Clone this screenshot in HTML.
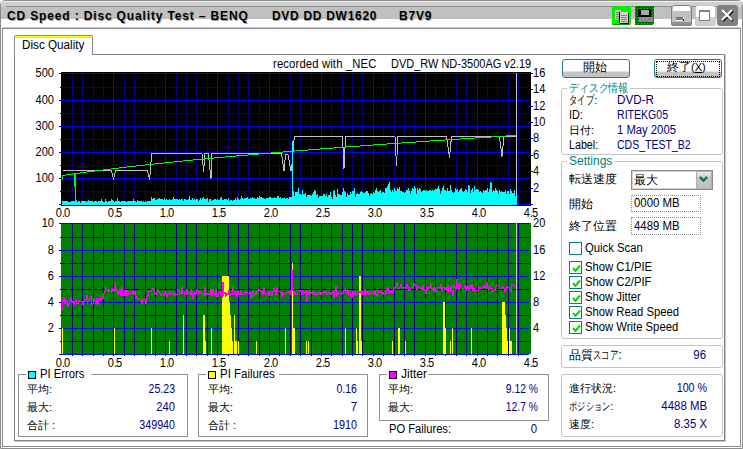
<!DOCTYPE html>
<html><head><meta charset="utf-8">
<style>
*{margin:0;padding:0;box-sizing:border-box}
html,body{width:743px;height:449px;overflow:hidden;background:#fff}
body{position:relative;font-family:"Liberation Sans",sans-serif;font-size:11px;color:#000}
.a{position:absolute}
.t{position:absolute;white-space:pre;line-height:12px}
.hl{position:absolute;height:1px;background:#8c8c8c}
.vl{position:absolute;width:1px;background:#8c8c8c}
.nv{color:#000080}
.grp{position:absolute;border:1px solid #c4c4c4;border-radius:3px}
.box{position:absolute;border:1px solid #8c8c8c}
.cb{position:absolute;width:13px;height:13px;border:1px solid #008080;background:#fff}
.ck{position:absolute;left:1px;top:1px}
.axl{position:absolute;white-space:pre;line-height:12px;font-size:11px}
</style></head><body>
<!-- window frame -->
<div class="a" style="left:0;top:0;width:743px;height:449px;border:1px solid #8c8c8c;border-top-left-radius:5px;border-top-right-radius:5px"></div>
<div class="a" style="left:1px;top:1px;width:741px;height:6px;background:#d0d0d0;border-top:1px solid #f4f4f4;border-top-left-radius:4px;border-top-right-radius:4px"></div>
<div class="hl" style="left:6px;top:6px;width:731px;background:#8c8c8c"></div>
<div class="a" style="left:1px;top:7px;width:741px;height:12px;background:#c0c0c0"></div>
<div class="hl" style="left:3px;top:27px;width:737px;background:#c8c8c8"></div>
<div class="box" style="left:2px;top:28px;width:739px;height:419px"></div>
<!-- title -->
<div class="t" style="left:7px;top:9px;font-size:12px;font-weight:bold;letter-spacing:0.85px;line-height:14px;text-shadow:1px 1px 0 #a8a8a8">CD Speed : Disc Quality Test – BENQ</div>
<div class="t" style="left:272px;top:9px;font-size:12px;font-weight:bold;letter-spacing:0.7px;line-height:14px;text-shadow:1px 1px 0 #a8a8a8">DVD DD DW1620</div>
<div class="t" style="left:399px;top:9px;font-size:12px;font-weight:bold;letter-spacing:0.8px;line-height:14px;text-shadow:1px 1px 0 #a8a8a8">B7V9</div>
<!-- title icons -->
<svg class="a" style="left:611px;top:5px" width="45" height="21" shape-rendering="crispEdges">
<rect x="1" y="1" width="19" height="19" rx="2" fill="#00f000"/>
<rect x="2" y="19" width="17" height="1" fill="#00a000"/>
<rect x="4" y="5" width="4" height="2" fill="#a0c8a0"/>
<rect x="4" y="5" width="6" height="10" fill="#c4c4c4"/>
<path d="M5 7h4M5 9h4M5 11h4M5 13h4" stroke="#808080"/>
<rect x="9" y="7" width="8" height="11" fill="#d4d4d4"/>
<rect x="17" y="8" width="1" height="11" fill="#000"/>
<rect x="9" y="18" width="9" height="1" fill="#000"/>
<rect x="8" y="7" width="1" height="11" fill="#000"/>
<path d="M10 10h6M10 12h6M10 14h6M10 16h6" stroke="#808080"/>
<rect x="24" y="1" width="19" height="19" rx="2" fill="#006800"/>
<rect x="24" y="1" width="19" height="19" rx="2" fill="url(#dots)"/>
<rect x="27" y="4" width="13" height="8" fill="#000"/>
<rect x="30" y="5" width="8" height="5" fill="#a8a8a8"/>
<rect x="28" y="12" width="14" height="5" fill="#909090"/>
<path d="M30 14h1M34 15h1M38 14h1M31 16h1M36 16h1" stroke="#3050c0"/>
<defs><pattern id="dots" width="3" height="3" patternUnits="userSpaceOnUse"><rect x="0" y="0" width="1" height="1" fill="#00e000"/><rect x="2" y="1" width="1" height="1" fill="#00b000"/></pattern></defs>
</svg>
<svg class="a" style="left:670px;top:4px" width="47" height="23" shape-rendering="crispEdges">
<rect x="1.5" y="1.5" width="20" height="20" rx="3" fill="#c0c0c0" stroke="#808080"/>
<rect x="3" y="2" width="17" height="5" fill="#ffffff"/>
<rect x="2" y="18" width="19" height="3" fill="#909090"/>
<rect x="6" y="13" width="8" height="4" fill="#ffffff"/>
<rect x="6" y="13" width="7" height="3" fill="#808080"/>
<path d="M6 13h1M8 13h1M10 13h1M12 13h1" stroke="#008080"/>
<rect x="13" y="15" width="1" height="2" fill="#0000a0"/>
<rect x="25.5" y="1.5" width="20" height="20" rx="3" fill="#ffffff" stroke="#c8c8c8"/>
<rect x="26" y="13" width="19" height="8" fill="#d0d0d0"/>
<rect x="29.5" y="6.5" width="10" height="10" fill="#fff" stroke="#808080"/>
<rect x="30" y="7" width="10" height="1" fill="#808080"/>
</svg>
<div class="a" style="left:717px;top:5px;width:21px;height:21px;background:#808080;border-radius:3px"></div>
<svg class="a" style="left:717px;top:5px" width="21" height="21"><path d="M5 5L15 15M15 5L5 15" stroke="#000" stroke-width="2.5" transform="translate(0.8,0.8)"/><path d="M5 5L15 15M15 5L5 15" stroke="#fff" stroke-width="2.2"/></svg>

<!-- tab -->
<div class="box" style="left:14px;top:54px;width:711px;height:387px;border-color:#808080;box-shadow:1px 1px 0 #c8c8c8"></div>
<div class="a" style="left:14px;top:35px;width:79px;height:20px;background:#fff;border:1px solid #8c8c8c;border-bottom:none;border-top-left-radius:2px;border-top-right-radius:2px"></div>
<div class="a" style="left:15px;top:36px;width:77px;height:1px;background:#ffff00"></div>
<div class="a" style="left:15px;top:37px;width:77px;height:1px;background:repeating-linear-gradient(90deg,#ffff00 0,#ffff00 2px,#c8c8a0 2px,#c8c8a0 3px)"></div>
<div class="t" style="left:22px;top:39px;font-size:12px;transform:scaleX(0.975);transform-origin:0 0">Disc Quality</div>

<svg class="a" style="left:0;top:0" width="743" height="449" shape-rendering="crispEdges">
<rect x="61" y="72" width="470" height="134" fill="#000"/>
<rect x="61" y="223" width="470" height="131" fill="#008000"/>
<rect x="72" y="73" width="1" height="133" fill="#000080"/>
<rect x="72" y="223" width="1" height="133" fill="#000080"/>
<rect x="82" y="73" width="1" height="133" fill="#000080"/>
<rect x="82" y="223" width="1" height="133" fill="#000080"/>
<rect x="93" y="73" width="1" height="133" fill="#000080"/>
<rect x="93" y="223" width="1" height="133" fill="#000080"/>
<rect x="103" y="73" width="1" height="133" fill="#000080"/>
<rect x="103" y="223" width="1" height="133" fill="#000080"/>
<rect x="113" y="73" width="1" height="133" fill="#0000ff"/>
<rect x="113" y="223" width="1" height="133" fill="#0000ff"/>
<rect x="124" y="73" width="1" height="133" fill="#000080"/>
<rect x="124" y="223" width="1" height="133" fill="#000080"/>
<rect x="134" y="73" width="1" height="133" fill="#000080"/>
<rect x="134" y="223" width="1" height="133" fill="#000080"/>
<rect x="145" y="73" width="1" height="133" fill="#000080"/>
<rect x="145" y="223" width="1" height="133" fill="#000080"/>
<rect x="155" y="73" width="1" height="133" fill="#000080"/>
<rect x="155" y="223" width="1" height="133" fill="#000080"/>
<rect x="165" y="73" width="1" height="133" fill="#0000ff"/>
<rect x="165" y="223" width="1" height="133" fill="#0000ff"/>
<rect x="176" y="73" width="1" height="133" fill="#000080"/>
<rect x="176" y="223" width="1" height="133" fill="#000080"/>
<rect x="186" y="73" width="1" height="133" fill="#000080"/>
<rect x="186" y="223" width="1" height="133" fill="#000080"/>
<rect x="196" y="73" width="1" height="133" fill="#000080"/>
<rect x="196" y="223" width="1" height="133" fill="#000080"/>
<rect x="207" y="73" width="1" height="133" fill="#000080"/>
<rect x="207" y="223" width="1" height="133" fill="#000080"/>
<rect x="217" y="73" width="1" height="133" fill="#0000ff"/>
<rect x="217" y="223" width="1" height="133" fill="#0000ff"/>
<rect x="228" y="73" width="1" height="133" fill="#000080"/>
<rect x="228" y="223" width="1" height="133" fill="#000080"/>
<rect x="238" y="73" width="1" height="133" fill="#000080"/>
<rect x="238" y="223" width="1" height="133" fill="#000080"/>
<rect x="248" y="73" width="1" height="133" fill="#000080"/>
<rect x="248" y="223" width="1" height="133" fill="#000080"/>
<rect x="259" y="73" width="1" height="133" fill="#000080"/>
<rect x="259" y="223" width="1" height="133" fill="#000080"/>
<rect x="269" y="73" width="1" height="133" fill="#0000ff"/>
<rect x="269" y="223" width="1" height="133" fill="#0000ff"/>
<rect x="279" y="73" width="1" height="133" fill="#000080"/>
<rect x="279" y="223" width="1" height="133" fill="#000080"/>
<rect x="290" y="73" width="1" height="133" fill="#000080"/>
<rect x="290" y="223" width="1" height="133" fill="#000080"/>
<rect x="300" y="73" width="1" height="133" fill="#000080"/>
<rect x="300" y="223" width="1" height="133" fill="#000080"/>
<rect x="311" y="73" width="1" height="133" fill="#000080"/>
<rect x="311" y="223" width="1" height="133" fill="#000080"/>
<rect x="321" y="73" width="1" height="133" fill="#0000ff"/>
<rect x="321" y="223" width="1" height="133" fill="#0000ff"/>
<rect x="331" y="73" width="1" height="133" fill="#000080"/>
<rect x="331" y="223" width="1" height="133" fill="#000080"/>
<rect x="342" y="73" width="1" height="133" fill="#000080"/>
<rect x="342" y="223" width="1" height="133" fill="#000080"/>
<rect x="352" y="73" width="1" height="133" fill="#000080"/>
<rect x="352" y="223" width="1" height="133" fill="#000080"/>
<rect x="362" y="73" width="1" height="133" fill="#000080"/>
<rect x="362" y="223" width="1" height="133" fill="#000080"/>
<rect x="373" y="73" width="1" height="133" fill="#0000ff"/>
<rect x="373" y="223" width="1" height="133" fill="#0000ff"/>
<rect x="383" y="73" width="1" height="133" fill="#000080"/>
<rect x="383" y="223" width="1" height="133" fill="#000080"/>
<rect x="394" y="73" width="1" height="133" fill="#000080"/>
<rect x="394" y="223" width="1" height="133" fill="#000080"/>
<rect x="404" y="73" width="1" height="133" fill="#000080"/>
<rect x="404" y="223" width="1" height="133" fill="#000080"/>
<rect x="414" y="73" width="1" height="133" fill="#000080"/>
<rect x="414" y="223" width="1" height="133" fill="#000080"/>
<rect x="425" y="73" width="1" height="133" fill="#0000ff"/>
<rect x="425" y="223" width="1" height="133" fill="#0000ff"/>
<rect x="435" y="73" width="1" height="133" fill="#000080"/>
<rect x="435" y="223" width="1" height="133" fill="#000080"/>
<rect x="445" y="73" width="1" height="133" fill="#000080"/>
<rect x="445" y="223" width="1" height="133" fill="#000080"/>
<rect x="456" y="73" width="1" height="133" fill="#000080"/>
<rect x="456" y="223" width="1" height="133" fill="#000080"/>
<rect x="466" y="73" width="1" height="133" fill="#000080"/>
<rect x="466" y="223" width="1" height="133" fill="#000080"/>
<rect x="477" y="73" width="1" height="133" fill="#0000ff"/>
<rect x="477" y="223" width="1" height="133" fill="#0000ff"/>
<rect x="487" y="73" width="1" height="133" fill="#000080"/>
<rect x="487" y="223" width="1" height="133" fill="#000080"/>
<rect x="497" y="73" width="1" height="133" fill="#000080"/>
<rect x="497" y="223" width="1" height="133" fill="#000080"/>
<rect x="508" y="73" width="1" height="133" fill="#000080"/>
<rect x="508" y="223" width="1" height="133" fill="#000080"/>
<rect x="518" y="73" width="1" height="133" fill="#000080"/>
<rect x="518" y="223" width="1" height="133" fill="#000080"/>
<rect x="61" y="73" width="468" height="1" fill="#0000ff"/>
<rect x="59" y="73" width="2" height="1" fill="#0000ff"/>
<rect x="61" y="87" width="468" height="1" fill="#000080"/>
<rect x="60" y="87" width="1" height="1" fill="#000080"/>
<rect x="61" y="100" width="468" height="1" fill="#0000ff"/>
<rect x="59" y="100" width="2" height="1" fill="#0000ff"/>
<rect x="61" y="113" width="468" height="1" fill="#000080"/>
<rect x="60" y="113" width="1" height="1" fill="#000080"/>
<rect x="61" y="126" width="468" height="1" fill="#0000ff"/>
<rect x="59" y="126" width="2" height="1" fill="#0000ff"/>
<rect x="61" y="139" width="468" height="1" fill="#000080"/>
<rect x="60" y="139" width="1" height="1" fill="#000080"/>
<rect x="61" y="152" width="468" height="1" fill="#0000ff"/>
<rect x="59" y="152" width="2" height="1" fill="#0000ff"/>
<rect x="61" y="165" width="468" height="1" fill="#000080"/>
<rect x="60" y="165" width="1" height="1" fill="#000080"/>
<rect x="61" y="178" width="468" height="1" fill="#0000ff"/>
<rect x="59" y="178" width="2" height="1" fill="#0000ff"/>
<rect x="61" y="191" width="468" height="1" fill="#000080"/>
<rect x="60" y="191" width="1" height="1" fill="#000080"/>
<rect x="61" y="204" width="468" height="1" fill="#0000ff"/>
<rect x="59" y="204" width="2" height="1" fill="#0000ff"/>
<rect x="61" y="223" width="468" height="1" fill="#0000ff"/>
<rect x="59" y="223" width="2" height="1" fill="#0000ff"/>
<rect x="61" y="237" width="468" height="1" fill="#000080"/>
<rect x="60" y="237" width="1" height="1" fill="#000080"/>
<rect x="61" y="250" width="468" height="1" fill="#0000ff"/>
<rect x="59" y="250" width="2" height="1" fill="#0000ff"/>
<rect x="61" y="263" width="468" height="1" fill="#000080"/>
<rect x="60" y="263" width="1" height="1" fill="#000080"/>
<rect x="61" y="276" width="468" height="1" fill="#0000ff"/>
<rect x="59" y="276" width="2" height="1" fill="#0000ff"/>
<rect x="61" y="289" width="468" height="1" fill="#000080"/>
<rect x="60" y="289" width="1" height="1" fill="#000080"/>
<rect x="61" y="302" width="468" height="1" fill="#0000ff"/>
<rect x="59" y="302" width="2" height="1" fill="#0000ff"/>
<rect x="61" y="315" width="468" height="1" fill="#000080"/>
<rect x="60" y="315" width="1" height="1" fill="#000080"/>
<rect x="61" y="328" width="468" height="1" fill="#0000ff"/>
<rect x="59" y="328" width="2" height="1" fill="#0000ff"/>
<rect x="61" y="341" width="468" height="1" fill="#000080"/>
<rect x="60" y="341" width="1" height="1" fill="#000080"/>
<rect x="61" y="354" width="468" height="1" fill="#0000ff"/>
<rect x="59" y="354" width="2" height="1" fill="#0000ff"/>
<rect x="529" y="204" width="4" height="1" fill="#0000ff"/>
<rect x="529" y="196" width="2" height="1" fill="#000080"/>
<rect x="529" y="188" width="4" height="1" fill="#0000ff"/>
<rect x="529" y="179" width="2" height="1" fill="#000080"/>
<rect x="529" y="171" width="4" height="1" fill="#0000ff"/>
<rect x="529" y="163" width="2" height="1" fill="#000080"/>
<rect x="529" y="155" width="4" height="1" fill="#0000ff"/>
<rect x="529" y="147" width="2" height="1" fill="#000080"/>
<rect x="529" y="138" width="4" height="1" fill="#0000ff"/>
<rect x="529" y="130" width="2" height="1" fill="#000080"/>
<rect x="529" y="122" width="4" height="1" fill="#0000ff"/>
<rect x="529" y="114" width="2" height="1" fill="#000080"/>
<rect x="529" y="106" width="4" height="1" fill="#0000ff"/>
<rect x="529" y="98" width="2" height="1" fill="#000080"/>
<rect x="529" y="89" width="4" height="1" fill="#0000ff"/>
<rect x="529" y="81" width="2" height="1" fill="#000080"/>
<rect x="529" y="73" width="4" height="1" fill="#0000ff"/>
<polyline points="62.5,170.5 111.5,170.5 113.5,179.5 115.5,170.5 147.5,170.5 149.5,179.5 150.5,170.5 151.5,153.5 202.0,153.5 202.5,158.5 203.5,171.5 204.5,160.5 205.0,153.5 208.5,153.5 209.5,165.5 211.0,178.5 212.0,153.5 281.5,153.5 284.0,171.0 285.5,154.5 288.0,154.5 291.0,171.0 292.5,160.5 293.5,141.5 295.0,136.5 342.5,136.5 344.0,168.5 345.5,136.5 395.0,136.5 396.5,165.5 398.0,136.5 446.5,136.5 449.5,157.5 451.5,136.5 499.5,136.5 502.0,156.5 504.0,136.5 515.5,136.5" fill="none" stroke="#c0c0c0" stroke-width="1"/>
<rect x="516" y="73" width="1" height="132" fill="#c0c0c0"/>
<rect x="62" y="175" width="1" height="5" fill="#00ff00"/>
<rect x="62" y="175" width="4" height="1" fill="#00ff00"/>
<rect x="66" y="174" width="7" height="1" fill="#00ff00"/>
<rect x="73" y="173" width="7" height="1" fill="#00ff00"/>
<rect x="80" y="172" width="7" height="1" fill="#00ff00"/>
<rect x="87" y="171" width="8" height="1" fill="#00ff00"/>
<rect x="95" y="170" width="8" height="1" fill="#00ff00"/>
<rect x="103" y="169" width="8" height="1" fill="#00ff00"/>
<rect x="111" y="168" width="8" height="1" fill="#00ff00"/>
<rect x="119" y="167" width="8" height="1" fill="#00ff00"/>
<rect x="127" y="166" width="9" height="1" fill="#00ff00"/>
<rect x="136" y="165" width="9" height="1" fill="#00ff00"/>
<rect x="145" y="164" width="9" height="1" fill="#00ff00"/>
<rect x="154" y="163" width="10" height="1" fill="#00ff00"/>
<rect x="164" y="162" width="9" height="1" fill="#00ff00"/>
<rect x="173" y="161" width="10" height="1" fill="#00ff00"/>
<rect x="183" y="160" width="10" height="1" fill="#00ff00"/>
<rect x="193" y="159" width="11" height="1" fill="#00ff00"/>
<rect x="204" y="158" width="10" height="1" fill="#00ff00"/>
<rect x="214" y="157" width="11" height="1" fill="#00ff00"/>
<rect x="225" y="156" width="11" height="1" fill="#00ff00"/>
<rect x="236" y="155" width="12" height="1" fill="#00ff00"/>
<rect x="248" y="154" width="11" height="1" fill="#00ff00"/>
<rect x="259" y="153" width="12" height="1" fill="#00ff00"/>
<rect x="271" y="152" width="12" height="1" fill="#00ff00"/>
<rect x="283" y="151" width="12" height="1" fill="#00ff00"/>
<rect x="295" y="150" width="13" height="1" fill="#00ff00"/>
<rect x="308" y="149" width="12" height="1" fill="#00ff00"/>
<rect x="320" y="148" width="13" height="1" fill="#00ff00"/>
<rect x="333" y="147" width="13" height="1" fill="#00ff00"/>
<rect x="346" y="146" width="14" height="1" fill="#00ff00"/>
<rect x="360" y="145" width="13" height="1" fill="#00ff00"/>
<rect x="373" y="144" width="14" height="1" fill="#00ff00"/>
<rect x="387" y="143" width="14" height="1" fill="#00ff00"/>
<rect x="401" y="142" width="15" height="1" fill="#00ff00"/>
<rect x="416" y="141" width="14" height="1" fill="#00ff00"/>
<rect x="430" y="140" width="15" height="1" fill="#00ff00"/>
<rect x="445" y="139" width="15" height="1" fill="#00ff00"/>
<rect x="460" y="138" width="15" height="1" fill="#00ff00"/>
<rect x="475" y="137" width="16" height="1" fill="#00ff00"/>
<rect x="491" y="136" width="15" height="1" fill="#00ff00"/>
<rect x="506" y="135" width="10" height="1" fill="#00ff00"/>
<rect x="74" y="173" width="2" height="14" fill="#00ff00"/>
<rect x="75" y="187" width="1" height="17" fill="#00ff00"/>
<path d="M62,205 L62,201 L63,201 L63,201 L64,201 L64,201 L65,201 L65,201 L66,201 L66,201 L67,201 L67,201 L68,201 L68,202 L69,202 L69,202 L70,202 L70,202 L71,202 L71,201 L72,201 L72,201 L73,201 L73,201 L74,201 L74,201 L75,201 L75,202 L76,202 L76,200 L77,200 L77,202 L78,202 L78,201 L79,201 L79,201 L80,201 L80,203 L81,203 L81,201 L82,201 L82,201 L83,201 L83,201 L84,201 L84,201 L85,201 L85,201 L86,201 L86,202 L87,202 L87,201 L88,201 L88,200 L89,200 L89,201 L90,201 L90,201 L91,201 L91,201 L92,201 L92,201 L93,201 L93,202 L94,202 L94,201 L95,201 L95,201 L96,201 L96,201 L97,201 L97,202 L98,202 L98,201 L99,201 L99,201 L100,201 L100,201 L101,201 L101,199 L102,199 L102,201 L103,201 L103,202 L104,202 L104,202 L105,202 L105,199 L106,199 L106,201 L107,201 L107,202 L108,202 L108,201 L109,201 L109,201 L110,201 L110,201 L111,201 L111,199 L112,199 L112,200 L113,200 L113,201 L114,201 L114,202 L115,202 L115,201 L116,201 L116,201 L117,201 L117,198 L118,198 L118,201 L119,201 L119,201 L120,201 L120,202 L121,202 L121,201 L122,201 L122,201 L123,201 L123,201 L124,201 L124,201 L125,201 L125,201 L126,201 L126,202 L127,202 L127,201 L128,201 L128,201 L129,201 L129,201 L130,201 L130,201 L131,201 L131,201 L132,201 L132,201 L133,201 L133,199 L134,199 L134,201 L135,201 L135,201 L136,201 L136,202 L137,202 L137,200 L138,200 L138,201 L139,201 L139,201 L140,201 L140,201 L141,201 L141,201 L142,201 L142,202 L143,202 L143,201 L144,201 L144,202 L145,202 L145,201 L146,201 L146,202 L147,202 L147,201 L148,201 L148,201 L149,201 L149,201 L150,201 L150,201 L151,201 L151,197 L152,197 L152,199 L153,199 L153,198 L154,198 L154,198 L155,198 L155,200 L156,200 L156,200 L157,200 L157,199 L158,199 L158,199 L159,199 L159,198 L160,198 L160,199 L161,199 L161,199 L162,199 L162,199 L163,199 L163,200 L164,200 L164,198 L165,198 L165,200 L166,200 L166,199 L167,199 L167,200 L168,200 L168,200 L169,200 L169,199 L170,199 L170,200 L171,200 L171,200 L172,200 L172,199 L173,199 L173,197 L174,197 L174,199 L175,199 L175,199 L176,199 L176,199 L177,199 L177,199 L178,199 L178,200 L179,200 L179,199 L180,199 L180,200 L181,200 L181,199 L182,199 L182,199 L183,199 L183,201 L184,201 L184,199 L185,199 L185,199 L186,199 L186,200 L187,200 L187,200 L188,200 L188,199 L189,199 L189,196 L190,196 L190,200 L191,200 L191,200 L192,200 L192,198 L193,198 L193,200 L194,200 L194,199 L195,199 L195,200 L196,200 L196,199 L197,199 L197,199 L198,199 L198,201 L199,201 L199,200 L200,200 L200,198 L201,198 L201,200 L202,200 L202,198 L203,198 L203,197 L204,197 L204,199 L205,199 L205,199 L206,199 L206,199 L207,199 L207,198 L208,198 L208,202 L209,202 L209,199 L210,199 L210,199 L211,199 L211,201 L212,201 L212,200 L213,200 L213,200 L214,200 L214,199 L215,199 L215,199 L216,199 L216,200 L217,200 L217,199 L218,199 L218,200 L219,200 L219,200 L220,200 L220,198 L221,198 L221,197 L222,197 L222,200 L223,200 L223,200 L224,200 L224,199 L225,199 L225,199 L226,199 L226,199 L227,199 L227,200 L228,200 L228,198 L229,198 L229,201 L230,201 L230,200 L231,200 L231,200 L232,200 L232,201 L233,201 L233,200 L234,200 L234,200 L235,200 L235,198 L236,198 L236,200 L237,200 L237,197 L238,197 L238,199 L239,199 L239,200 L240,200 L240,199 L241,199 L241,196 L242,196 L242,198 L243,198 L243,199 L244,199 L244,198 L245,198 L245,198 L246,198 L246,198 L247,198 L247,197 L248,197 L248,199 L249,199 L249,199 L250,199 L250,198 L251,198 L251,198 L252,198 L252,197 L253,197 L253,198 L254,198 L254,198 L255,198 L255,199 L256,199 L256,199 L257,199 L257,197 L258,197 L258,198 L259,198 L259,196 L260,196 L260,197 L261,197 L261,197 L262,197 L262,198 L263,198 L263,198 L264,198 L264,199 L265,199 L265,199 L266,199 L266,198 L267,198 L267,198 L268,198 L268,198 L269,198 L269,197 L270,197 L270,197 L271,197 L271,198 L272,198 L272,198 L273,198 L273,198 L274,198 L274,197 L275,197 L275,198 L276,198 L276,198 L277,198 L277,196 L278,196 L278,196 L279,196 L279,198 L280,198 L280,197 L281,197 L281,199 L282,199 L282,198 L283,198 L283,198 L284,198 L284,198 L285,198 L285,199 L286,199 L286,198 L287,198 L287,198 L288,198 L288,199 L289,199 L289,197 L290,197 L290,197 L291,197 L291,197 L292,197 L292,199 L293,199 L293,191 L294,191 L294,196 L295,196 L295,192 L296,192 L296,192 L297,192 L297,192 L298,192 L298,188 L299,188 L299,194 L300,194 L300,194 L301,194 L301,195 L302,195 L302,190 L303,190 L303,194 L304,194 L304,194 L305,194 L305,193 L306,193 L306,197 L307,197 L307,195 L308,195 L308,195 L309,195 L309,195 L310,195 L310,195 L311,195 L311,196 L312,196 L312,194 L313,194 L313,192 L314,192 L314,190 L315,190 L315,191 L316,191 L316,195 L317,195 L317,194 L318,194 L318,198 L319,198 L319,196 L320,196 L320,196 L321,196 L321,196 L322,196 L322,196 L323,196 L323,194 L324,194 L324,194 L325,194 L325,196 L326,196 L326,194 L327,194 L327,197 L328,197 L328,195 L329,195 L329,195 L330,195 L330,192 L331,192 L331,197 L332,197 L332,199 L333,199 L333,191 L334,191 L334,190 L335,190 L335,195 L336,195 L336,197 L337,197 L337,189 L338,189 L338,194 L339,194 L339,194 L340,194 L340,195 L341,195 L341,195 L342,195 L342,192 L343,192 L343,188 L344,188 L344,191 L345,191 L345,192 L346,192 L346,197 L347,197 L347,193 L348,193 L348,195 L349,195 L349,195 L350,195 L350,192 L351,192 L351,194 L352,194 L352,191 L353,191 L353,191 L354,191 L354,188 L355,188 L355,197 L356,197 L356,194 L357,194 L357,193 L358,193 L358,194 L359,194 L359,194 L360,194 L360,192 L361,192 L361,191 L362,191 L362,192 L363,192 L363,193 L364,193 L364,193 L365,193 L365,192 L366,192 L366,191 L367,191 L367,191 L368,191 L368,193 L369,193 L369,196 L370,196 L370,194 L371,194 L371,193 L372,193 L372,194 L373,194 L373,192 L374,192 L374,193 L375,193 L375,190 L376,190 L376,188 L377,188 L377,191 L378,191 L378,192 L379,192 L379,191 L380,191 L380,190 L381,190 L381,193 L382,193 L382,192 L383,192 L383,192 L384,192 L384,193 L385,193 L385,188 L386,188 L386,188 L387,188 L387,186 L388,186 L388,184 L389,184 L389,182 L390,182 L390,190 L391,190 L391,192 L392,192 L392,190 L393,190 L393,192 L394,192 L394,188 L395,188 L395,190 L396,190 L396,191 L397,191 L397,188 L398,188 L398,189 L399,189 L399,187 L400,187 L400,191 L401,191 L401,191 L402,191 L402,192 L403,192 L403,192 L404,192 L404,193 L405,193 L405,192 L406,192 L406,190 L407,190 L407,190 L408,190 L408,188 L409,188 L409,191 L410,191 L410,194 L411,194 L411,191 L412,191 L412,188 L413,188 L413,189 L414,189 L414,186 L415,186 L415,188 L416,188 L416,194 L417,194 L417,188 L418,188 L418,190 L419,190 L419,188 L420,188 L420,189 L421,189 L421,192 L422,192 L422,191 L423,191 L423,190 L424,190 L424,190 L425,190 L425,191 L426,191 L426,190 L427,190 L427,191 L428,191 L428,191 L429,191 L429,190 L430,190 L430,190 L431,190 L431,191 L432,191 L432,190 L433,190 L433,191 L434,191 L434,190 L435,190 L435,189 L436,189 L436,189 L437,189 L437,188 L438,188 L438,186 L439,186 L439,189 L440,189 L440,194 L441,194 L441,191 L442,191 L442,188 L443,188 L443,186 L444,186 L444,190 L445,190 L445,190 L446,190 L446,191 L447,191 L447,188 L448,188 L448,191 L449,191 L449,191 L450,191 L450,185 L451,185 L451,190 L452,190 L452,192 L453,192 L453,193 L454,193 L454,192 L455,192 L455,188 L456,188 L456,190 L457,190 L457,189 L458,189 L458,192 L459,192 L459,190 L460,190 L460,189 L461,189 L461,188 L462,188 L462,191 L463,191 L463,192 L464,192 L464,191 L465,191 L465,189 L466,189 L466,190 L467,190 L467,192 L468,192 L468,185 L469,185 L469,186 L470,186 L470,193 L471,193 L471,190 L472,190 L472,188 L473,188 L473,192 L474,192 L474,186 L475,186 L475,190 L476,190 L476,189 L477,189 L477,189 L478,189 L478,190 L479,190 L479,192 L480,192 L480,191 L481,191 L481,192 L482,192 L482,193 L483,193 L483,190 L484,190 L484,191 L485,191 L485,190 L486,190 L486,190 L487,190 L487,188 L488,188 L488,192 L489,192 L489,189 L490,189 L490,182 L491,182 L491,183 L492,183 L492,192 L493,192 L493,190 L494,190 L494,191 L495,191 L495,188 L496,188 L496,190 L497,190 L497,191 L498,191 L498,194 L499,194 L499,190 L500,190 L500,192 L501,192 L501,191 L502,191 L502,192 L503,192 L503,192 L504,192 L504,192 L505,192 L505,190 L506,190 L506,194 L507,194 L507,191 L508,191 L508,191 L509,191 L509,194 L510,194 L510,189 L511,189 L511,191 L512,191 L512,193 L513,193 L513,193 L514,193 L514,190 L515,190 L515,196 L516,196 L516,195 L517,195 L517,205 Z" fill="#00ffff"/>
<rect x="292" y="141" width="1" height="64" fill="#00ffff"/>
<rect x="62" y="328" width="1" height="26" fill="#ffff00"/>
<rect x="114" y="328" width="1" height="26" fill="#ffff00"/>
<rect x="151" y="328" width="1" height="26" fill="#ffff00"/>
<rect x="169" y="341" width="1" height="13" fill="#ffff00"/>
<rect x="183" y="315" width="1" height="39" fill="#ffff00"/>
<rect x="203" y="315" width="2" height="39" fill="#ffff00"/>
<rect x="205" y="341" width="1" height="13" fill="#ffff00"/>
<rect x="211" y="328" width="1" height="26" fill="#ffff00"/>
<rect x="222" y="276" width="7" height="78" fill="#ffff00"/>
<rect x="229" y="302" width="1" height="52" fill="#ffff00"/>
<rect x="230" y="315" width="1" height="39" fill="#ffff00"/>
<rect x="231" y="328" width="1" height="26" fill="#ffff00"/>
<rect x="232" y="341" width="1" height="13" fill="#ffff00"/>
<rect x="234" y="315" width="1" height="39" fill="#ffff00"/>
<rect x="235" y="341" width="2" height="13" fill="#ffff00"/>
<rect x="238" y="341" width="1" height="13" fill="#ffff00"/>
<rect x="256" y="341" width="1" height="13" fill="#ffff00"/>
<rect x="285" y="328" width="1" height="26" fill="#ffff00"/>
<rect x="292" y="263" width="1" height="91" fill="#ffff00"/>
<rect x="293" y="328" width="2" height="26" fill="#ffff00"/>
<rect x="306" y="341" width="1" height="13" fill="#ffff00"/>
<rect x="308" y="341" width="1" height="13" fill="#ffff00"/>
<rect x="345" y="328" width="1" height="26" fill="#ffff00"/>
<rect x="356" y="328" width="1" height="26" fill="#ffff00"/>
<rect x="359" y="276" width="2" height="78" fill="#ffff00"/>
<rect x="357" y="341" width="1" height="13" fill="#ffff00"/>
<rect x="361" y="341" width="1" height="13" fill="#ffff00"/>
<rect x="392" y="341" width="1" height="13" fill="#ffff00"/>
<rect x="398" y="328" width="2" height="26" fill="#ffff00"/>
<rect x="405" y="341" width="1" height="13" fill="#ffff00"/>
<rect x="443" y="302" width="2" height="52" fill="#ffff00"/>
<rect x="445" y="328" width="1" height="26" fill="#ffff00"/>
<rect x="450" y="341" width="1" height="13" fill="#ffff00"/>
<rect x="452" y="328" width="1" height="26" fill="#ffff00"/>
<rect x="471" y="328" width="1" height="26" fill="#ffff00"/>
<rect x="502" y="302" width="3" height="52" fill="#ffff00"/>
<rect x="505" y="315" width="1" height="39" fill="#ffff00"/>
<rect x="506" y="328" width="1" height="26" fill="#ffff00"/>
<rect x="507" y="341" width="1" height="13" fill="#ffff00"/>
<rect x="509" y="328" width="1" height="26" fill="#ffff00"/>
<rect x="510" y="341" width="1" height="13" fill="#ffff00"/>
<rect x="511" y="341" width="1" height="13" fill="#ffff00"/>
<polyline points="62,310.0 63,300.7 64,297.0 65,303.9 66,300.4 67,301.7 68,306.6 69,303.2 70,301.5 71,298.9 72,302.7 73,301.4 74,305.0 75,301.8 76,300.4 77,303.3 78,303.6 79,300.6 80,301.8 81,301.6 82,301.4 83,304.3 84,301.0 85,299.6 86,299.5 87,295.4 88,301.9 89,299.6 90,298.8 91,296.2 92,304.2 93,303.5 94,299.1 95,300.0 96,303.2 97,298.6 98,304.8 99,299.2 100,300.3 101,294.7 102,299.2 103,298.8 104,293.5 105,290.2 106,287.5 107,289.8 108,291.8 109,289.7 110,291.9 111,291.2 112,288.7 113,291.0 114,290.8 115,282.9 116,290.9 117,289.7 118,295.1 119,292.0 120,289.7 121,295.8 122,287.1 123,295.1 124,295.2 125,290.1 126,295.5 127,290.4 128,294.1 129,292.3 130,293.7 131,292.8 132,293.6 133,290.5 134,294.5 135,291.2 136,299.1 137,296.2 138,299.4 139,299.4 140,299.9 141,300.0 142,303.4 143,300.1 144,298.6 145,299.5 146,303.7 147,296.5 148,295.1 149,291.4 150,290.1 151,291.7 152,289.2 153,288.2 154,289.7 155,293.3 156,294.4 157,292.9 158,289.3 159,291.5 160,293.1 161,295.5 162,293.6 163,293.8 164,295.1 165,291.1 166,293.8 167,296.7 168,294.8 169,293.4 170,291.6 171,294.6 172,293.4 173,292.8 174,295.5 175,293.7 176,294.3 177,294.6 178,290.1 179,290.0 180,294.0 181,293.4 182,287.5 183,293.0 184,292.5 185,294.2 186,294.5 187,289.2 188,293.2 189,293.2 190,294.4 191,288.7 192,294.1 193,298.4 194,292.7 195,294.6 196,293.6 197,289.7 198,290.9 199,294.0 200,291.4 201,292.3 202,294.0 203,293.4 204,294.3 205,287.3 206,295.0 207,293.5 208,294.8 209,294.4 210,294.2 211,289.6 212,295.7 213,289.2 214,293.8 215,295.0 216,288.9 217,296.4 218,295.0 219,292.4 220,292.9 221,294.1 222,295.9 223,282.0 224,294.1 225,292.8 226,296.0 227,293.4 228,294.5 229,290.1 230,295.5 231,294.3 232,294.1 233,286.9 234,291.6 235,294.2 236,292.4 237,296.7 238,291.9 239,294.7 240,294.1 241,291.7 242,294.1 243,294.0 244,294.6 245,292.3 246,291.8 247,292.0 248,293.5 249,293.0 250,292.0 251,297.8 252,293.7 253,291.3 254,296.0 255,294.9 256,291.5 257,293.8 258,291.9 259,289.0 260,290.9 261,291.6 262,291.7 263,294.9 264,287.5 265,294.5 266,294.7 267,294.1 268,292.8 269,295.5 270,291.7 271,293.1 272,295.2 273,291.3 274,288.3 275,290.7 276,296.3 277,287.6 278,290.3 279,291.4 280,291.5 281,292.3 282,296.1 283,293.0 284,294.7 285,293.5 286,293.5 287,292.7 288,292.1 289,291.9 290,293.1 291,294.4 292,270.0 293,290.7 294,294.9 295,292.2 296,294.5 297,294.2 298,290.8 299,290.4 300,290.5 301,291.0 302,295.0 303,290.6 304,293.2 305,292.2 306,291.2 307,301.6 308,290.7 309,294.5 310,291.1 311,292.8 312,293.4 313,291.9 314,294.2 315,292.6 316,294.9 317,294.9 318,292.8 319,293.3 320,292.0 321,294.3 322,292.4 323,292.8 324,293.3 325,291.9 326,291.9 327,294.1 328,294.1 329,292.7 330,293.7 331,294.3 332,293.0 333,290.0 334,297.9 335,291.5 336,286.2 337,295.1 338,292.9 339,293.2 340,293.4 341,294.6 342,293.8 343,292.7 344,290.9 345,289.6 346,292.4 347,290.2 348,295.0 349,290.7 350,292.9 351,296.1 352,297.2 353,291.6 354,294.2 355,291.2 356,295.0 357,294.4 358,292.1 359,292.9 360,291.7 361,292.5 362,291.9 363,294.8 364,294.6 365,289.4 366,295.1 367,291.6 368,292.6 369,294.3 370,292.7 371,293.7 372,291.4 373,291.3 374,294.6 375,291.0 376,294.9 377,295.8 378,290.6 379,292.1 380,292.6 381,290.1 382,293.4 383,292.6 384,294.7 385,294.5 386,292.2 387,287.8 388,288.7 389,294.1 390,290.6 391,292.4 392,290.2 393,292.3 394,289.7 395,287.0 396,285.8 397,283.1 398,288.5 399,288.4 400,287.1 401,284.8 402,287.6 403,288.0 404,287.9 405,287.1 406,288.6 407,284.4 408,286.1 409,290.6 410,289.2 411,289.0 412,287.7 413,287.8 414,283.7 415,285.8 416,285.7 417,290.2 418,286.7 419,287.4 420,287.4 421,288.9 422,289.4 423,285.3 424,289.2 425,290.5 426,294.3 427,287.5 428,289.8 429,287.1 430,287.0 431,283.3 432,289.1 433,288.7 434,291.0 435,287.7 436,292.1 437,290.2 438,287.7 439,287.8 440,288.7 441,284.1 442,290.2 443,287.8 444,287.2 445,289.6 446,287.6 447,290.1 448,285.2 449,291.8 450,290.9 451,286.4 452,290.7 453,295.5 454,285.7 455,287.1 456,290.1 457,279.5 458,285.4 459,289.8 460,283.9 461,286.6 462,289.0 463,289.8 464,288.4 465,286.0 466,290.4 467,286.9 468,286.4 469,289.7 470,285.6 471,288.2 472,283.9 473,290.2 474,288.8 475,291.1 476,290.7 477,290.2 478,290.2 479,286.9 480,288.4 481,288.0 482,288.8 483,286.5 484,287.7 485,285.6 486,287.6 487,282.4 488,288.3 489,289.8 490,285.7 491,288.1 492,288.4 493,291.2 494,290.8 495,289.8 496,286.2 497,285.7 498,285.0 499,284.4 500,288.5 501,288.4 502,287.0 503,286.7 504,288.8 505,291.9 506,289.6 507,286.7 508,287.9 509,287.4 510,289.7 511,291.3 512,284.3 513,284.5 514,285.8 515,287.4" fill="none" stroke="#ff00ff" stroke-width="1.3"/>
<rect x="516" y="223" width="1" height="131" fill="#c4c4c4"/>
<rect x="59" y="354" width="470" height="1" fill="#0000ff"/>
</svg>
<!-- chart texts -->
<div class="t" style="left:273px;top:58px;letter-spacing:0.15px;font-size:12px;transform:scaleX(0.94);transform-origin:0 0">recorded with _NEC</div>
<div class="t" style="left:391px;top:58px;font-size:12px;transform:scaleX(0.915);transform-origin:0 0">DVD_RW ND-3500AG v2.19</div>
<div class="axl" style="left:19px;top:67px;width:35px;text-align:right;font-size:12px;transform:scaleX(0.92);transform-origin:100% 0">500</div>
<div class="axl" style="left:19px;top:94px;width:35px;text-align:right;font-size:12px;transform:scaleX(0.92);transform-origin:100% 0">400</div>
<div class="axl" style="left:19px;top:120px;width:35px;text-align:right;font-size:12px;transform:scaleX(0.92);transform-origin:100% 0">300</div>
<div class="axl" style="left:19px;top:146px;width:35px;text-align:right;font-size:12px;transform:scaleX(0.92);transform-origin:100% 0">200</div>
<div class="axl" style="left:19px;top:172px;width:35px;text-align:right;font-size:12px;transform:scaleX(0.92);transform-origin:100% 0">100</div>
<div class="axl" style="left:19px;top:217px;width:35px;text-align:right;font-size:12px;transform:scaleX(0.92);transform-origin:100% 0">10</div>
<div class="axl" style="left:19px;top:244px;width:35px;text-align:right;font-size:12px;transform:scaleX(0.92);transform-origin:100% 0">8</div>
<div class="axl" style="left:19px;top:270px;width:35px;text-align:right;font-size:12px;transform:scaleX(0.92);transform-origin:100% 0">6</div>
<div class="axl" style="left:19px;top:296px;width:35px;text-align:right;font-size:12px;transform:scaleX(0.92);transform-origin:100% 0">4</div>
<div class="axl" style="left:19px;top:322px;width:35px;text-align:right;font-size:12px;transform:scaleX(0.92);transform-origin:100% 0">2</div>
<div class="axl" style="left:533px;top:182px;font-size:12px;transform:scaleX(0.92);transform-origin:0 0">2</div>
<div class="axl" style="left:533px;top:165px;font-size:12px;transform:scaleX(0.92);transform-origin:0 0">4</div>
<div class="axl" style="left:533px;top:149px;font-size:12px;transform:scaleX(0.92);transform-origin:0 0">6</div>
<div class="axl" style="left:533px;top:132px;font-size:12px;transform:scaleX(0.92);transform-origin:0 0">8</div>
<div class="axl" style="left:533px;top:116px;font-size:12px;transform:scaleX(0.92);transform-origin:0 0">10</div>
<div class="axl" style="left:533px;top:100px;font-size:12px;transform:scaleX(0.92);transform-origin:0 0">12</div>
<div class="axl" style="left:533px;top:83px;font-size:12px;transform:scaleX(0.92);transform-origin:0 0">14</div>
<div class="axl" style="left:533px;top:67px;font-size:12px;transform:scaleX(0.92);transform-origin:0 0">16</div>
<div class="axl" style="left:533px;top:217px;font-size:12px;transform:scaleX(0.92);transform-origin:0 0">20</div>
<div class="axl" style="left:533px;top:244px;font-size:12px;transform:scaleX(0.92);transform-origin:0 0">16</div>
<div class="axl" style="left:533px;top:270px;font-size:12px;transform:scaleX(0.92);transform-origin:0 0">12</div>
<div class="axl" style="left:533px;top:296px;font-size:12px;transform:scaleX(0.92);transform-origin:0 0">8</div>
<div class="axl" style="left:533px;top:322px;font-size:12px;transform:scaleX(0.92);transform-origin:0 0">4</div>
<div class="axl" style="left:42.5px;top:207px;width:40px;text-align:center;font-size:12px;transform:scaleX(0.92)">0<span style="letter-spacing:-1.1px">.</span>0</div>
<div class="axl" style="left:42.5px;top:357px;width:40px;text-align:center;font-size:12px;transform:scaleX(0.92)">0<span style="letter-spacing:-1.1px">.</span>0</div>
<div class="axl" style="left:94.5px;top:207px;width:40px;text-align:center;font-size:12px;transform:scaleX(0.92)">0<span style="letter-spacing:-1.1px">.</span>5</div>
<div class="axl" style="left:94.5px;top:357px;width:40px;text-align:center;font-size:12px;transform:scaleX(0.92)">0<span style="letter-spacing:-1.1px">.</span>5</div>
<div class="axl" style="left:146.5px;top:207px;width:40px;text-align:center;font-size:12px;transform:scaleX(0.92)">1<span style="letter-spacing:-1.1px">.</span>0</div>
<div class="axl" style="left:146.5px;top:357px;width:40px;text-align:center;font-size:12px;transform:scaleX(0.92)">1<span style="letter-spacing:-1.1px">.</span>0</div>
<div class="axl" style="left:198.5px;top:207px;width:40px;text-align:center;font-size:12px;transform:scaleX(0.92)">1<span style="letter-spacing:-1.1px">.</span>5</div>
<div class="axl" style="left:198.5px;top:357px;width:40px;text-align:center;font-size:12px;transform:scaleX(0.92)">1<span style="letter-spacing:-1.1px">.</span>5</div>
<div class="axl" style="left:250.5px;top:207px;width:40px;text-align:center;font-size:12px;transform:scaleX(0.92)">2<span style="letter-spacing:-1.1px">.</span>0</div>
<div class="axl" style="left:250.5px;top:357px;width:40px;text-align:center;font-size:12px;transform:scaleX(0.92)">2<span style="letter-spacing:-1.1px">.</span>0</div>
<div class="axl" style="left:302.5px;top:207px;width:40px;text-align:center;font-size:12px;transform:scaleX(0.92)">2<span style="letter-spacing:-1.1px">.</span>5</div>
<div class="axl" style="left:302.5px;top:357px;width:40px;text-align:center;font-size:12px;transform:scaleX(0.92)">2<span style="letter-spacing:-1.1px">.</span>5</div>
<div class="axl" style="left:354.5px;top:207px;width:40px;text-align:center;font-size:12px;transform:scaleX(0.92)">3<span style="letter-spacing:-1.1px">.</span>0</div>
<div class="axl" style="left:354.5px;top:357px;width:40px;text-align:center;font-size:12px;transform:scaleX(0.92)">3<span style="letter-spacing:-1.1px">.</span>0</div>
<div class="axl" style="left:406.5px;top:207px;width:40px;text-align:center;font-size:12px;transform:scaleX(0.92)">3<span style="letter-spacing:-1.1px">.</span>5</div>
<div class="axl" style="left:406.5px;top:357px;width:40px;text-align:center;font-size:12px;transform:scaleX(0.92)">3<span style="letter-spacing:-1.1px">.</span>5</div>
<div class="axl" style="left:458.5px;top:207px;width:40px;text-align:center;font-size:12px;transform:scaleX(0.92)">4<span style="letter-spacing:-1.1px">.</span>0</div>
<div class="axl" style="left:458.5px;top:357px;width:40px;text-align:center;font-size:12px;transform:scaleX(0.92)">4<span style="letter-spacing:-1.1px">.</span>0</div>
<div class="axl" style="left:510.5px;top:207px;width:40px;text-align:center;font-size:12px;transform:scaleX(0.92)">4<span style="letter-spacing:-1.1px">.</span>5</div>
<div class="axl" style="left:510.5px;top:357px;width:40px;text-align:center;font-size:12px;transform:scaleX(0.92)">4<span style="letter-spacing:-1.1px">.</span>5</div>

<!-- right panel -->
<div class="a" style="left:562px;top:59px;width:68px;height:19px;border:1px solid #208080;border-radius:3px;background:linear-gradient(#fff 0,#fff 11px,#c4c4c4 12px)"></div>
<div class="a" style="left:566px;top:70px;width:60px;border-top:1px dotted #fff"></div>
<div class="t" style="left:583px;top:61px;font-size:12px">開始</div>
<div class="a" style="left:654px;top:59px;width:68px;height:19px;border:1px solid #208080;border-radius:3px;background:linear-gradient(#fff 0,#fff 11px,#c4c4c4 12px)"></div>
<div class="a" style="left:656px;top:61px;width:64px;height:16px;border:1px dotted #000"></div>
<div class="t" style="left:667px;top:61px;font-size:12px">終了<span style="font-size:11px">(<u>X</u>)</span></div>

<div class="grp" style="left:561px;top:88px;width:162px;height:67px"></div>
<div class="a" style="left:567px;top:84px;width:63px;height:8px;background:#fff"></div><div class="t" style="left:569px;top:81px;color:#008080;font-size:12px;line-height:14px;transform:scaleX(0.82);transform-origin:0 0">ディスク情報</div>
<div class="t" style="left:569px;top:93px;font-size:11px;line-height:14px"><span style="display:inline-block;font-size:12px;transform:scaleX(0.7);transform-origin:0 0;margin-right:-10.8px">タイプ</span>:</div>
<div class="t nv" style="left:617px;top:94px;font-size:12px;transform:scaleX(0.97);transform-origin:0 0">DVD-R</div>
<div class="t" style="left:569px;top:109px;font-size:12px;transform:scaleX(0.9);transform-origin:0 0">ID:</div>
<div class="t nv" style="left:617px;top:109px;font-size:12px;transform:scaleX(0.88);transform-origin:0 0">RITEKG05</div>
<div class="t" style="left:569px;top:124px;font-size:11px">日付:</div>
<div class="t nv" style="left:617px;top:124px;font-size:12px;transform:scaleX(0.94);transform-origin:0 0">1 May 2005</div>
<div class="t" style="left:569px;top:139px;font-size:12px;transform:scaleX(0.89);transform-origin:0 0">Label:</div>
<div class="t nv" style="left:617px;top:139px;font-size:12px;transform:scaleX(0.877);transform-origin:0 0">CDS_TEST_B2</div>

<div class="grp" style="left:561px;top:161px;width:162px;height:178px"></div>
<div class="t" style="left:567px;top:155px;color:#008080;background:#fff;padding:0 2px;font-size:12px">Settings</div>
<div class="t" style="left:569px;top:172px;font-size:12px;line-height:14px">転送速度</div>
<div class="a" style="left:631px;top:170px;width:82px;height:20px;border:1px solid #8c8c8c;box-shadow:inset 0 0 0 1px #d4d4d4;background:#fff"></div>
<div class="t" style="left:634px;top:173px;font-size:12px;line-height:14px">最大</div>
<div class="a" style="left:696px;top:171px;width:16px;height:18px;background:linear-gradient(#f0f0f0,#c4c4c4 40%,#c0c0c0);border:1px solid #b0b0b0"></div>
<svg class="a" style="left:696px;top:171px" width="16" height="18"><path d="M4 6L7.5 9.5L11 6" stroke="#004040" stroke-width="2.2" fill="none"/><path d="M4.5 6.2L7.5 9L10.5 6.2" stroke="#30d030" stroke-width="0.9" fill="none"/></svg>
<div class="t" style="left:569px;top:197px;font-size:12px;line-height:14px">開始</div>
<div class="a" style="left:631px;top:195px;width:70px;height:17px;border:1px dotted #909090"></div>
<div class="t" style="left:634px;top:197px;font-size:12px;transform:scaleX(0.95);transform-origin:0 0">0000 MB</div>
<div class="t" style="left:569px;top:219px;font-size:12px;line-height:14px">終了位置</div>
<div class="a" style="left:631px;top:217px;width:70px;height:18px;border:1px dotted #909090"></div>
<div class="t" style="left:634px;top:220px;font-size:12px;transform:scaleX(0.95);transform-origin:0 0">4489 MB</div>
<div class="cb" style="left:569px;top:242px"></div><div class="t" style="left:585px;top:242px;font-size:12px;transform:scaleX(0.94);transform-origin:0 0">Quick Scan</div>
<div class="cb" style="left:569px;top:261px"><svg class="ck" width="11" height="11"><path d="M2 5L4.5 8L9 2.5" stroke="#00d800" stroke-width="2" fill="none"/></svg></div><div class="t" style="left:585px;top:261px;font-size:12px;transform:scaleX(0.94);transform-origin:0 0">Show C1/PIE</div>
<div class="cb" style="left:569px;top:276px"><svg class="ck" width="11" height="11"><path d="M2 5L4.5 8L9 2.5" stroke="#00d800" stroke-width="2" fill="none"/></svg></div><div class="t" style="left:585px;top:276px;font-size:12px;transform:scaleX(0.94);transform-origin:0 0">Show C2/PIF</div>
<div class="cb" style="left:569px;top:291px"><svg class="ck" width="11" height="11"><path d="M2 5L4.5 8L9 2.5" stroke="#00d800" stroke-width="2" fill="none"/></svg></div><div class="t" style="left:585px;top:291px;font-size:12px;transform:scaleX(0.94);transform-origin:0 0">Show Jitter</div>
<div class="cb" style="left:569px;top:306px"><svg class="ck" width="11" height="11"><path d="M2 5L4.5 8L9 2.5" stroke="#00d800" stroke-width="2" fill="none"/></svg></div><div class="t" style="left:585px;top:306px;font-size:12px;transform:scaleX(0.94);transform-origin:0 0">Show Read Speed</div>
<div class="cb" style="left:569px;top:321px"><svg class="ck" width="11" height="11"><path d="M2 5L4.5 8L9 2.5" stroke="#00d800" stroke-width="2" fill="none"/></svg></div><div class="t" style="left:585px;top:321px;font-size:12px;transform:scaleX(0.94);transform-origin:0 0">Show Write Speed</div>

<div class="grp" style="left:561px;top:345px;width:162px;height:23px"></div>
<div class="t" style="left:569px;top:348px;font-size:12px;line-height:14px">品質<span style="display:inline-block;font-size:12px;transform:scaleX(0.7);transform-origin:0 0;margin-right:-10.8px">スコア</span>:</div>
<div class="t nv" style="left:606px;top:349px;width:100px;text-align:right;font-size:12px;transform:scaleX(0.95);transform-origin:100% 0">96</div>
<div class="grp" style="left:561px;top:374px;width:162px;height:63px"></div>
<div class="t" style="left:569px;top:382px;font-size:11px">進行状況:</div>
<div class="t nv" style="left:607px;top:382px;width:100px;text-align:right;font-size:12px;transform:scaleX(0.89);transform-origin:100% 0">100 %</div>
<div class="t" style="left:569px;top:400px;font-size:11px"><span style="display:inline-block;font-size:11px;transform:scaleX(0.75);transform-origin:0 0;margin-right:-13.8px">ポジション</span>:</div>
<div class="t nv" style="left:607px;top:400px;width:100px;text-align:right;font-size:12px;transform:scaleX(0.95);transform-origin:100% 0">4488 MB</div>
<div class="t" style="left:569px;top:418px;font-size:11px">速度:</div>
<div class="t nv" style="left:607px;top:418px;width:100px;text-align:right;font-size:12px;transform:scaleX(0.95);transform-origin:100% 0">8.35 X</div>

<!-- bottom stats -->
<div class="box" style="left:18px;top:374px;width:170px;height:63px;border-color:#909090"></div>
<div class="t" style="left:26px;top:368px;background:#fff;padding:0 4px 0 2px"><span style="display:inline-block;width:8px;height:8px;background:#00ffff;border:1px solid #000;vertical-align:-1px;margin-right:4px"></span><span style="display:inline-block;font-size:12px;transform:scaleX(0.94);transform-origin:0 0">PI Errors</span></div>
<div class="t" style="left:27px;top:383px;font-size:11px">平均:</div>
<div class="t nv" style="left:75px;top:383px;width:100px;text-align:right;font-size:12px;transform:scaleX(0.88);transform-origin:100% 0">25.23</div>
<div class="t" style="left:27px;top:401px;font-size:11px">最大:</div>
<div class="t nv" style="left:75px;top:401px;width:100px;text-align:right;font-size:12px;transform:scaleX(0.93);transform-origin:100% 0">240</div>
<div class="t" style="left:27px;top:419px;font-size:11px">合計 :</div>
<div class="t nv" style="left:75px;top:419px;width:100px;text-align:right;font-size:12px;transform:scaleX(0.89);transform-origin:100% 0">349940</div>

<div class="box" style="left:198px;top:374px;width:170px;height:63px;border-color:#909090"></div>
<div class="t" style="left:206px;top:368px;background:#fff;padding:0 4px 0 2px"><span style="display:inline-block;width:8px;height:8px;background:#ffff00;border:1px solid #000;vertical-align:-1px;margin-right:4px"></span><span style="display:inline-block;font-size:12px;transform:scaleX(0.955);transform-origin:0 0;margin-right:-2.6px">PI Failures</span></div>
<div class="t" style="left:208px;top:383px;font-size:11px">平均:</div>
<div class="t nv" style="left:257px;top:383px;width:100px;text-align:right;font-size:12px;transform:scaleX(0.88);transform-origin:100% 0">0.16</div>
<div class="t" style="left:208px;top:401px;font-size:11px">最大:</div>
<div class="t nv" style="left:257px;top:401px;width:100px;text-align:right;font-size:12px;transform:scaleX(0.95);transform-origin:100% 0">7</div>
<div class="t" style="left:208px;top:419px;font-size:11px">合計 :</div>
<div class="t nv" style="left:257px;top:419px;width:100px;text-align:right;font-size:12px;transform:scaleX(0.9);transform-origin:100% 0">1910</div>

<div class="box" style="left:379px;top:374px;width:170px;height:47px;border-color:#909090"></div>
<div class="t" style="left:387px;top:368px;background:#fff;padding:0 1px 0 2px"><span style="display:inline-block;width:8px;height:8px;background:#ff00ff;border:1px solid #000;vertical-align:-1px;margin-right:4px"></span><span style="display:inline-block;font-size:12px">Jitter</span></div>
<div class="t" style="left:388px;top:383px;font-size:11px">平均:</div>
<div class="t nv" style="left:438px;top:383px;width:100px;text-align:right;font-size:12px;transform:scaleX(0.86);transform-origin:100% 0">9.12 %</div>
<div class="t" style="left:388px;top:401px;font-size:11px">最大:</div>
<div class="t nv" style="left:438px;top:401px;width:100px;text-align:right;font-size:12px;transform:scaleX(0.86);transform-origin:100% 0">12.7 %</div>
<div class="t" style="left:389px;top:423px;font-size:12px;transform:scaleX(0.93);transform-origin:0 0">PO Failures:</div>
<div class="t nv" style="left:437px;top:423px;width:100px;text-align:right;font-size:12px;transform:scaleX(0.95);transform-origin:100% 0">0</div>
</body></html>
